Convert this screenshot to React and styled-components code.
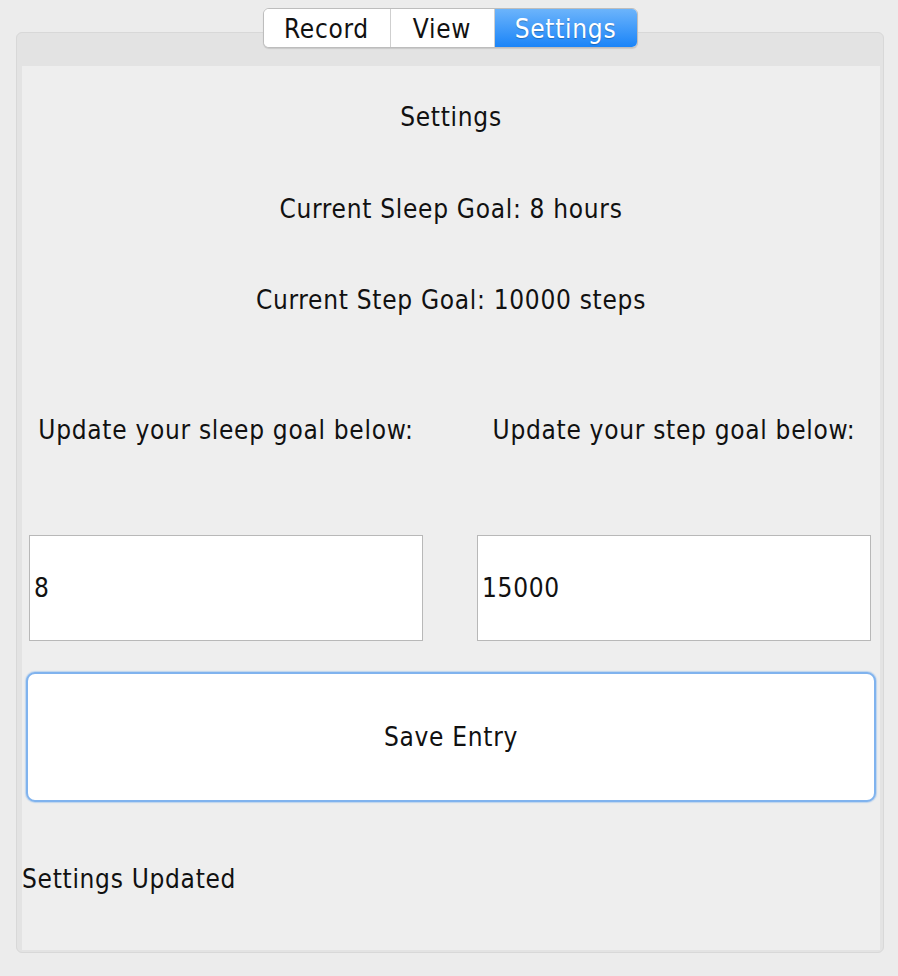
import React from "react";
import styled, { createGlobalStyle } from "styled-components";

const Global = createGlobalStyle`
  html, body { margin: 0; padding: 0; background: #ececec; }
  body {
    font-family: "DejaVu Sans Condensed", "DejaVu Sans", sans-serif;
    font-stretch: condensed;
    color: #111;
  }
`;

const Page = styled.div`
  width: 898px;
  height: 976px;
  padding: 8px 0 0 2px;
  box-sizing: border-box;
  display: flex;
  flex-direction: column;
  align-items: center;
`;

const TabBar = styled.div`
  position: relative;
  z-index: 2;
  display: inline-flex;
  height: 40px;
  border: 1px solid #bdbdbd;
  border-radius: 6px;
  background: #fff;
  box-shadow: 0 1px 1px rgba(0, 0, 0, 0.12);
  overflow: hidden;
  box-sizing: border-box;
`;

const Tab = styled.div`
  width: ${(p) => p.$w}px;
  display: flex;
  align-items: center;
  justify-content: center;
  padding-top: 2px;
  font-size: 26px;
  letter-spacing: 0.7px;
  box-sizing: border-box;
  border-left: ${(p) => (p.$first ? "none" : "1px solid #cfcfcf")};
  color: ${(p) => (p.$active ? "#fff" : "#111")};
  background: ${(p) =>
    p.$active ? "linear-gradient(#6cb4fb, #1a84f8)" : "#fff"};
  text-shadow: ${(p) => (p.$active ? "0 1px 1px rgba(0,0,0,0.25)" : "none")};
`;

const Panel = styled.div`
  margin-top: -16px;
  width: 868px;
  height: 921px;
  box-sizing: border-box;
  border: 1px solid #d8d8d8;
  border-radius: 6px;
  background: #e3e3e3;
  padding: 33px 3px 2px 5px;
  display: flex;
`;

const Content = styled.div`
  flex: 1;
  background: #eeeeee;
  display: flex;
  flex-direction: column;
  font-size: 26px;
  letter-spacing: 0.7px;
`;

const Line = styled.div`
  height: 30px;
  line-height: 30px;
  text-align: ${(p) => p.$align || "center"};
  margin-top: ${(p) => p.$mt}px;
  white-space: nowrap;
`;

const Row = styled.div`
  display: grid;
  grid-template-columns: 394px 394px;
  column-gap: 54px;
  padding-left: 7px;
  margin-top: ${(p) => p.$mt}px;
`;

const Label = styled.div`
  height: 30px;
  line-height: 30px;
  text-align: center;
  white-space: nowrap;
`;

const Field = styled.div`
  height: 106px;
  background: #fff;
  border: 1px solid #b8b8b8;
  box-sizing: border-box;
  display: flex;
  align-items: center;
  padding-left: 4px;
`;

const SaveButton = styled.div`
  margin: 31px 4px 0 4px;
  height: 130px;
  box-sizing: border-box;
  background: #fff;
  border: 2px solid #80b3ee;
  border-radius: 9px;
  box-shadow: 0 0 1px 1px rgba(128, 179, 238, 0.45);
  display: flex;
  align-items: center;
  justify-content: center;
`;

export default function App() {
  return (
    <>
      <Global />
      <Page>
        <TabBar>
          <Tab $w={126} $first>Record</Tab>
          <Tab $w={104}>View</Tab>
          <Tab $w={143} $active>Settings</Tab>
        </TabBar>
        <Panel>
          <Content>
            <Line $mt={36}>Settings</Line>
            <Line $mt={62}>Current Sleep Goal: 8 hours</Line>
            <Line $mt={61}>Current Step Goal: 10000 steps</Line>
            <Row $mt={100}>
              <Label>Update your sleep goal below:</Label>
              <Label>Update your step goal below:</Label>
            </Row>
            <Row $mt={90}>
              <Field>8</Field>
              <Field>15000</Field>
            </Row>
            <SaveButton>Save Entry</SaveButton>
            <Line $mt={62} $align="left">Settings Updated</Line>
          </Content>
        </Panel>
      </Page>
    </>
  );
}
